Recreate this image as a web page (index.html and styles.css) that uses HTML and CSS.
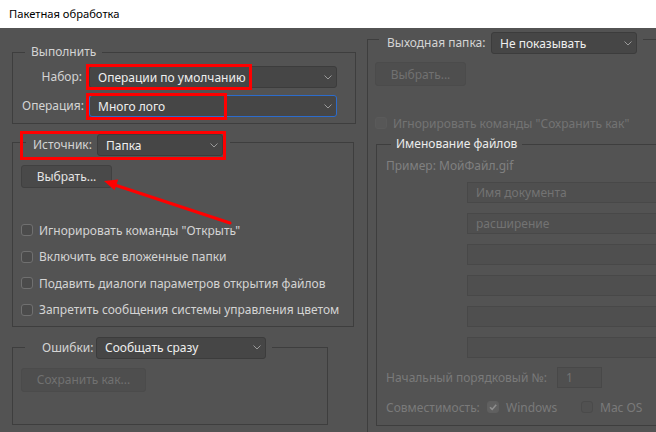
FILE: index.html
```html
<!DOCTYPE html>
<html lang="ru">
<head>
<meta charset="utf-8">
<title>Пакетная обработка</title>
<link rel="stylesheet" href="styles.css">
</head>
<body>
<div class="titlebar">Пакетная обработка</div>
<div class="main">
  <div class="col-left">
    <section class="group g-play">
      <div class="group-head head-play"><span class="legend">Выполнить</span></div>
      <div class="form-grid">
        <span class="lbl">Набор:</span>
        <div class="select"><span class="sel-text">Операции по умолчанию</span><svg class="chev" width="8" height="5" viewBox="0 0 8 5"><path d="M0.5 0.5 L4 4 L7.5 0.5" fill="none" stroke="#9a9a9a" stroke-width="1"/></svg></div>
        <span class="lbl">Операция:</span>
        <div class="select focused"><span class="sel-text">Много лого</span><svg class="chev" width="8" height="5" viewBox="0 0 8 5"><path d="M0.5 0.5 L4 4 L7.5 0.5" fill="none" stroke="#9a9a9a" stroke-width="1"/></svg></div>
      </div>
    </section>

    <section class="group g-source">
      <div class="group-head head-source">
        <span class="lbl lbl-source">Источник:</span>
        <div class="select sel-source"><span class="sel-text">Папка</span><svg class="chev" width="8" height="5" viewBox="0 0 8 5"><path d="M0.5 0.5 L4 4 L7.5 0.5" fill="none" stroke="#9a9a9a" stroke-width="1"/></svg></div>
      </div>
      <div class="btn btn-choose">Выбрать...</div>
      <div class="checks">
        <div class="check"><span class="box"></span><span>Игнорировать команды "Открыть"</span></div>
        <div class="check"><span class="box"></span><span>Включить все вложенные папки</span></div>
        <div class="check"><span class="box"></span><span>Подавить диалоги параметров открытия файлов</span></div>
        <div class="check"><span class="box"></span><span>Запретить сообщения системы управления цветом</span></div>
      </div>
    </section>

    <section class="group g-errors">
      <div class="group-head head-errors">
        <span class="lbl lbl-errors">Ошибки:</span>
        <div class="select sel-errors"><span class="sel-text">Сообщать сразу</span><svg class="chev" width="8" height="5" viewBox="0 0 8 5"><path d="M0.5 0.5 L4 4 L7.5 0.5" fill="none" stroke="#9a9a9a" stroke-width="1"/></svg></div>
      </div>
      <div class="btn disabled btn-save">Сохранить как...</div>
    </section>
  </div>

  <div class="col-right">
    <section class="group g-dest">
      <div class="group-head head-dest">
        <span class="lbl lbl-dest">Выходная папка:</span>
        <div class="select sel-dest"><span class="sel-text">Не показывать</span><svg class="chev" width="8" height="5" viewBox="0 0 8 5"><path d="M0.5 0.5 L4 4 L7.5 0.5" fill="none" stroke="#9a9a9a" stroke-width="1"/></svg></div>
      </div>
      <div class="btn disabled btn-choose2">Выбрать...</div>
      <div class="check disabled ignore-save"><span class="box"></span><span>Игнорировать команды "Сохранить как"</span></div>

      <section class="group g-naming">
        <div class="group-head head-naming"><span class="legend bright">Именование файлов</span></div>
        <div class="example">Пример: МойФайл.gif</div>
        <div class="fields">
          <div class="field">Имя документа</div>
          <div class="field">расширение</div>
          <div class="field"></div>
          <div class="field"></div>
          <div class="field"></div>
          <div class="field"></div>
        </div>
        <div class="serial">
          <span class="serial-lbl">Начальный порядковый №:</span>
          <div class="field field-num">1</div>
        </div>
        <div class="compat">
          <span class="compat-lbl">Совместимость:</span>
          <span class="box checked"><svg width="10" height="10" viewBox="0 0 10 10"><path d="M2 5.2 L4.2 7.4 L8.2 2.8" fill="none" stroke="#8e8e8e" stroke-width="1.6"/></svg></span>
          <span class="os-win">Windows</span>
          <span class="box"></span>
          <span class="os-mac">Mac OS</span>
        </div>
      </section>
    </section>
  </div>
</div>

<div class="annot annot-set"></div>
<div class="annot annot-op"></div>
<div class="annot annot-src"></div>
<svg class="arrow" width="656" height="432" viewBox="0 0 656 432">
  <line x1="230" y1="223" x2="115" y2="185" stroke="#ff0000" stroke-width="3" stroke-linecap="round"/>
  <polygon points="104,181 118.2,179.6 114.6,190.3" fill="#ff0000"/>
</svg>
</body>
</html>
```
FILE: styles.css
```css
* { box-sizing: border-box; }
html, body { margin: 0; padding: 0; }
body {
  width: 656px;
  height: 432px;
  overflow: hidden;
  position: relative;
  background: #535353;
  font-family: "Noto Sans", "Open Sans", sans-serif;
  font-size: 12px;
  color: #d4d4d4;
}

.titlebar {
  height: 28px;
  line-height: 28px;
  background: #ffffff;
  color: #000000;
  padding-left: 9px;
  font-size: 11.2px;
}

.main {
  display: flex;
  align-items: flex-start;
  padding-left: 12px;
}

.col-left {
  width: 344px;
  flex: none;
  display: flex;
  flex-direction: column;
}

.col-right {
  width: 310px;
  flex: none;
  margin-left: 11px;
}

.group {
  border: 1px solid #3e3e3e;
  display: flex;
  flex-direction: column;
  align-items: flex-start;
}

.group-head {
  display: flex;
  align-items: center;
  background: #535353;
  flex: none;
}

.legend {
  height: 16px;
  line-height: 16px;
  white-space: nowrap;
}
.legend.bright { color: #ececec; }

.lbl {
  white-space: nowrap;
  line-height: 22px;
}

/* dropdowns */
.select {
  display: flex;
  align-items: center;
  height: 22px;
  background: #464646;
  border: 1px solid #3c3c3c;
  border-radius: 3px;
  padding: 0 4px 0 8px;
  color: #efefef;
}
.select.focused { border-color: #2c6ccc; }
.sel-text { white-space: nowrap; flex: 1; }
.chev { flex: none; margin-left: 6px; }

/* buttons */
.btn {
  display: flex;
  align-items: center;
  justify-content: center;
  background: #494949;
  border: 1px solid #404040;
  border-radius: 3px;
  color: #e4e4e4;
  white-space: nowrap;
}
.btn.disabled {
  background: #4e4e4e;
  border-color: #4b4b4b;
  color: #717171;
}

/* checkboxes */
.check {
  display: flex;
  align-items: center;
  height: 16px;
  white-space: nowrap;
}
.box {
  width: 12px;
  height: 12px;
  flex: none;
  border: 1px solid #707070;
  background: #4b4b4b;
  border-radius: 3px;
  display: flex;
  align-items: center;
  justify-content: center;
}
.check .box { margin-right: 6px; }
.check.disabled { color: #737373; }
.check.disabled .box { border-color: #5a5a5a; background: #575757; }

/* group 1: Выполнить */
.g-play {
  margin-top: 24px;
  align-self: stretch;
  padding: 0 18px 6px 9px;
}
.head-play {
  margin: -9px 0 0 3px;
  padding: 0 6px;
}
.form-grid {
  align-self: stretch;
  margin-top: 6px;
  display: grid;
  grid-template-columns: 60px 1fr;
  grid-auto-rows: 22px;
  column-gap: 7px;
  row-gap: 7px;
}
.form-grid .lbl { text-align: right; }

/* group 2: Источник */
.g-source {
  margin-top: 18px;
  margin-right: 2px;
  padding: 0 0 8px 8px;
}
.head-source {
  margin: -9px 0 0 5px;
  padding: 0 7px;
}
.lbl-source { width: 58px; margin-right: 6px; }
.sel-source { width: 126px; }
.btn-choose {
  margin-top: 9px;
  width: 91px;
  height: 23px;
}
.checks {
  margin-top: 34px;
  display: flex;
  flex-direction: column;
  gap: 10.6px;
}

/* group 3: Ошибки */
.g-errors {
  margin-top: 20px;
  margin-right: 28px;
  padding: 0 0 32px 8px;
}
.head-errors {
  margin: -11px 0 0 4px;
  padding: 0 6px 0 17px;
}
.lbl-errors { width: 49px; margin-right: 5px; }
.sel-errors { width: 170px; }
.btn-save {
  margin-top: 9px;
  width: 125px;
  height: 24px;
}

/* right: Выходная папка */
.g-dest {
  margin-top: 11px;
  min-height: 420px;
  padding: 0 0 0 7px;
}
.head-dest {
  margin: -8px 0 0 4px;
  padding: 0 6px 0 8px;
}
.lbl-dest { width: 96px; margin-right: 8px; }
.sel-dest { width: 146px; }
.btn-choose2 {
  margin-top: 8px;
  width: 91px;
  height: 24px;
}
.ignore-save { margin-top: 29px; }

/* Именование файлов */
.g-naming {
  margin-top: 13px;
  margin-left: 1px;
  align-self: stretch;
  padding: 0 0 10px 9px;
}
.head-naming {
  margin: -9px 0 0 5px;
  padding: 0 5px;
}
.example {
  margin-top: 6px;
  height: 16px;
  line-height: 16px;
  color: #808080;
}
.fields {
  margin-top: 8px;
  margin-left: 81px;
  display: flex;
  flex-direction: column;
  gap: 10px;
}
.field {
  width: 230px;
  height: 21px;
  line-height: 19px;
  background: #4f4f4f;
  border: 1px solid #484848;
  color: #737373;
  padding-left: 8px;
  white-space: nowrap;
}
.serial {
  margin-top: 9px;
  display: flex;
  align-items: center;
  color: #7a7a7a;
}
.serial-lbl { width: 171px; white-space: nowrap; }
.field-num { width: 45px; }
.compat {
  margin-top: 11px;
  height: 16px;
  display: flex;
  align-items: center;
  color: #7a7a7a;
  white-space: nowrap;
}
.compat-lbl { width: 101px; }
.compat .box { border-color: #4a4a4a; background: #515151; }
.compat .box.checked { border-color: #5f5f5f; background: #606060; }
.os-win { width: 82px; padding-left: 7px; }
.os-mac { padding-left: 7px; }

/* annotations over the screenshot */
.annot {
  position: absolute;
  border: 3px solid #ff0000;
  pointer-events: none;
}
.annot-set { left: 86px; top: 64px; width: 166px; height: 26px; }
.annot-op { left: 86px; top: 93px; width: 141px; height: 27px; }
.annot-src { left: 20px; top: 131px; width: 206px; height: 29px; }
.arrow {
  position: absolute;
  left: 0;
  top: 0;
  pointer-events: none;
}
```
